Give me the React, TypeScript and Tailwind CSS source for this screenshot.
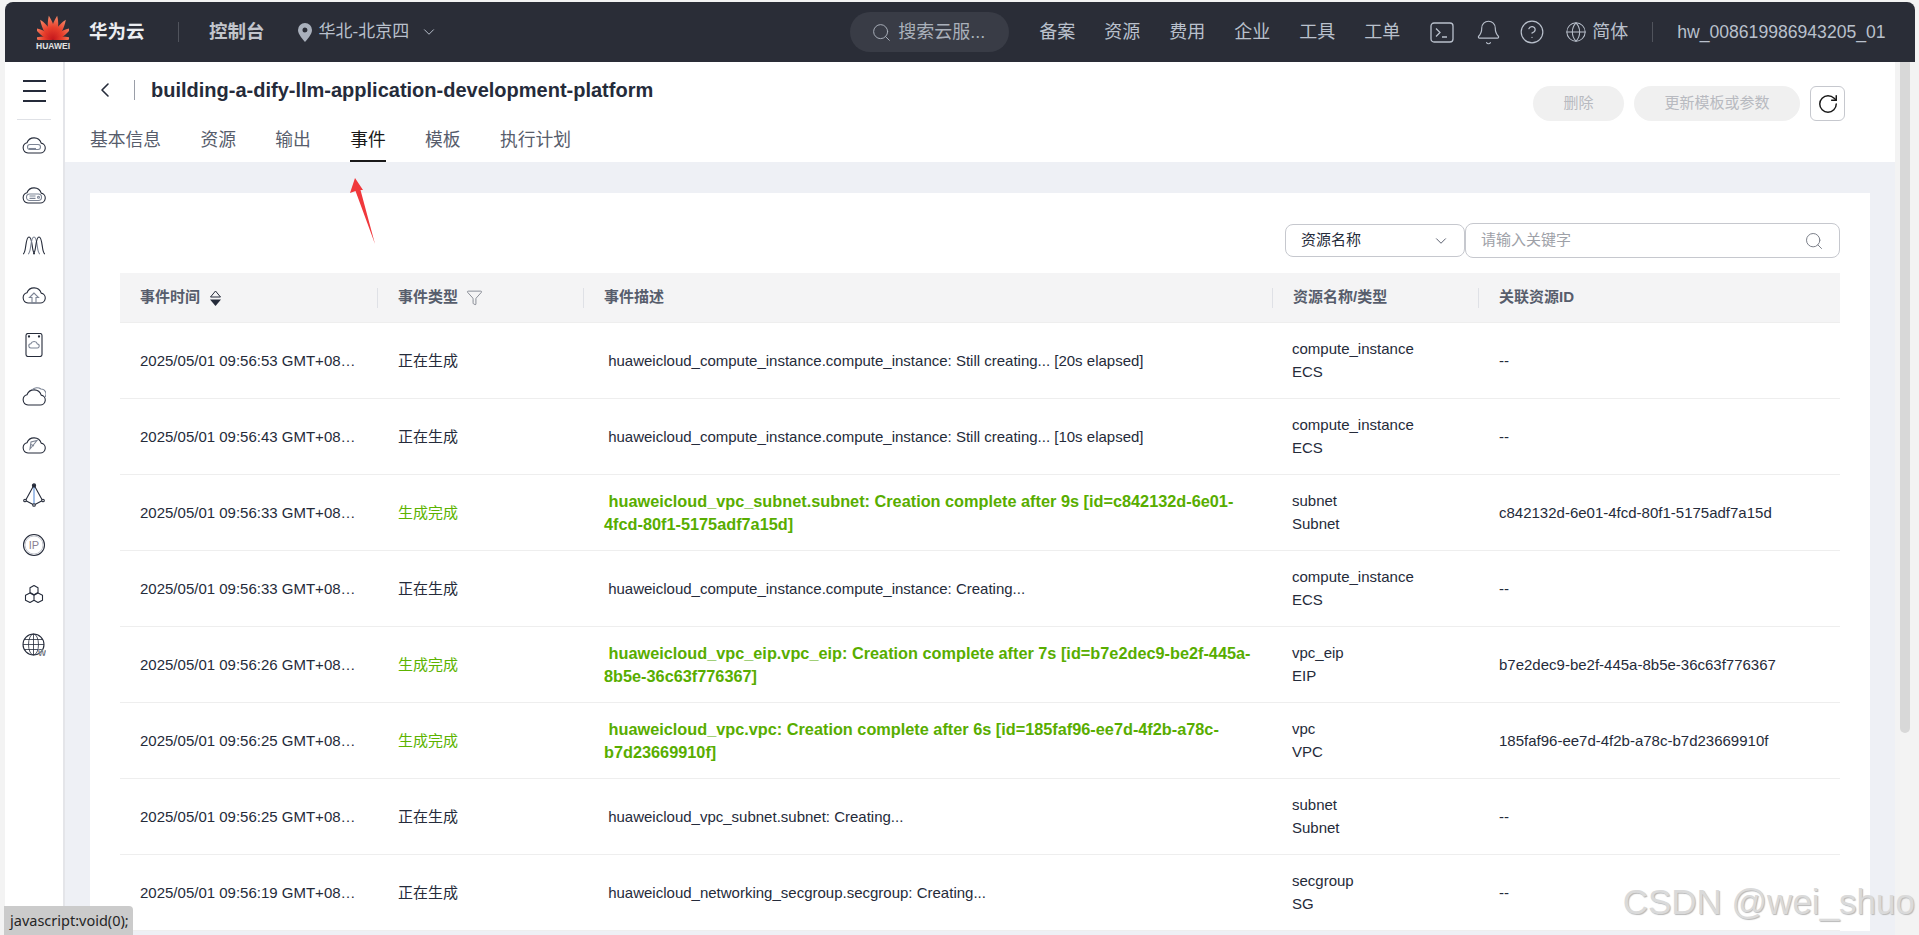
import { Bell, ChevronDown, ChevronLeft, CircleHelp, Funnel, Globe, RotateCw, Search } from 'lucide-react';
import type { ReactNode } from 'react';

type EventRow = {
    time: string;
    done: boolean;
    desc: string;
    name: string;
    type: string;
    id: string;
};

const navItems = ['备案', '资源', '费用', '企业', '工具', '工单'];
const tabs = ['基本信息', '资源', '输出', '事件', '模板', '执行计划'];

const rows: EventRow[] = [
    { time: '2025/05/01 09:56:53 GMT+08:00', done: false, desc: 'huaweicloud_compute_instance.compute_instance: Still creating... [20s elapsed]', name: 'compute_instance', type: 'ECS', id: '--' },
    { time: '2025/05/01 09:56:43 GMT+08:00', done: false, desc: 'huaweicloud_compute_instance.compute_instance: Still creating... [10s elapsed]', name: 'compute_instance', type: 'ECS', id: '--' },
    { time: '2025/05/01 09:56:33 GMT+08:00', done: true, desc: 'huaweicloud_vpc_subnet.subnet: Creation complete after 9s [id=c842132d-6e01-4fcd-80f1-5175adf7a15d]', name: 'subnet', type: 'Subnet', id: 'c842132d-6e01-4fcd-80f1-5175adf7a15d' },
    { time: '2025/05/01 09:56:33 GMT+08:00', done: false, desc: 'huaweicloud_compute_instance.compute_instance: Creating...', name: 'compute_instance', type: 'ECS', id: '--' },
    { time: '2025/05/01 09:56:26 GMT+08:00', done: true, desc: 'huaweicloud_vpc_eip.vpc_eip: Creation complete after 7s [id=b7e2dec9-be2f-445a-8b5e-36c63f776367]', name: 'vpc_eip', type: 'EIP', id: 'b7e2dec9-be2f-445a-8b5e-36c63f776367' },
    { time: '2025/05/01 09:56:25 GMT+08:00', done: true, desc: 'huaweicloud_vpc.vpc: Creation complete after 6s [id=185faf96-ee7d-4f2b-a78c-b7d23669910f]', name: 'vpc', type: 'VPC', id: '185faf96-ee7d-4f2b-a78c-b7d23669910f' },
    { time: '2025/05/01 09:56:25 GMT+08:00', done: false, desc: 'huaweicloud_vpc_subnet.subnet: Creating...', name: 'subnet', type: 'Subnet', id: '--' },
    { time: '2025/05/01 09:56:19 GMT+08:00', done: false, desc: 'huaweicloud_networking_secgroup.secgroup: Creating...', name: 'secgroup', type: 'SG', id: '--' },
];

const cloud = 'M6 17H18a5 5 0 0 0 1.2-9.9A7.5 7.5 0 0 0 5 6.8 5.2 5.2 0 0 0 6 17Z';

const NavIcon = ({ children }: { children: ReactNode }) => (
    <svg width="24" height="24" viewBox="0 0 24 24" fill="none" stroke="#252b3a" strokeWidth="1.1">
        {children}
    </svg>
);

const sideIcons: ReactNode[] = [
    <g transform="translate(0 3)">
        <path d={cloud} />
        <rect x="5.5" y="8.5" width="13" height="5" rx="2.5" stroke="#7d8595" />
        <path d="M7 12.5h7" stroke="#7d8595" />
    </g>,
    <g transform="translate(0 3)">
        <path d={cloud} />
        <rect x="4.5" y="8" width="15" height="6.5" rx="3.2" stroke="#7d8595" />
        <path d="M7.5 10h6M7.5 12.4h6" stroke="#7d8595" />
        <circle cx="16.5" cy="11.2" r="1" stroke="#7d8595" />
    </g>,
    <>
        <path d="M1 21C4.500 21 3 4 7 4C11 4 9.500 21 13 21" />
        <path d="M6 21C9.500 21 8 4 12 4C16 4 14.500 21 18 21" stroke="#7d8595" />
        <path d="M11 21C14.500 21 13 4 17 4C21 4 19.500 21 23 21" />
    </>,
    <g transform="translate(0 3)">
        <path d={cloud} />
        <path d="M12 7l-4.500 4.500H10V17h4v-5.500h2.500L12 7Z" stroke="#7d8595" />
    </g>,
    <>
        <rect x="4" y="0.5" width="16" height="23" rx="2" />
        <circle cx="7" cy="3.500" r="0.6" fill="#252b3a" />
        <circle cx="17" cy="3.500" r="0.6" fill="#252b3a" />
        <path d="M9 15h6a2 2 0 0 0 .4-4 3.500 3.500 0 0 0-6.600-.2A2.100 2.100 0 0 0 9 15Z" stroke="#7d8595" />
    </>,
    <g transform="translate(0 2)">
        <path d="M6 20H18a5 5 0 0 0 1.200-9.900A7.500 7.500 0 0 0 5 9.800 5.200 5.200 0 0 0 6 20Z" />
        <path d="M10 5a7 7 0 0 1 9-1 5 5 0 0 1 4 8" stroke="#7d8595" />
    </g>,
    <g transform="translate(0 3)">
        <path d={cloud} />
        <path d="M15 4.500L8 13l1-7 6-1.500ZM9 8.500l3 1.500" stroke="#7d8595" />
    </g>,
    <>
        <path d="M12 2L3.500 17.500 12 22l8.500-4.500L12 2Z" strokeLinejoin="round" />
        <path d="M12 2v20" stroke="#5b8fd8" />
        <circle cx="12" cy="2.500" r="1.600" fill="#252b3a" />
        <circle cx="3" cy="17.500" r="1.300" fill="#fff" />
        <circle cx="21" cy="17.500" r="1.300" fill="#fff" />
        <circle cx="12" cy="22" r="1.300" fill="#fff" />
    </>,
    <>
        <circle cx="12" cy="12" r="10.500" />
        <circle cx="12" cy="12" r="9" stroke="#9aa0ac" strokeWidth="0.6" />
        <text x="12" y="16" textAnchor="middle" fontSize="11" fontFamily="Liberation Sans" fill="#8a7f92" stroke="none">
            IP
        </text>
    </>,
    <>
        <path d="M12 2.500l4 2.300v4.700l-4 2.300-4-2.300V4.800l4-2.300Z" strokeLinejoin="round" />
        <path d="M8 10l4 2.200v5l-4 2.300-4.500-2.300v-5L8 10ZM16 10l4.500 2.200v5L16 19.500l-4-2.300v-5L16 10Z" strokeLinejoin="round" />
    </>,
    <>
        <circle cx="11.500" cy="11.500" r="10.500" />
        <path d="M1 11.500h21M2.500 6.500h18M2.500 16.500h18M11.500 1v21" strokeWidth="0.8" />
        <ellipse cx="11.500" cy="11.500" rx="5" ry="10.500" strokeWidth="0.8" />
        <text x="20" y="23" textAnchor="middle" fontSize="8.500" fontWeight="700" fontFamily="Liberation Sans" fill="#252b3a" stroke="#fff" strokeWidth="0.3">
            W
        </text>
    </>,
];

const HuaweiLogo = () => {
    const petals: [number, number][] = [
        [-86, 0.78],
        [-58, 0.9],
        [-33, 0.98],
        [-10, 1],
        [10, 1],
        [33, 0.98],
        [58, 0.9],
        [86, 0.78],
    ];
    return (
        <div className="flex w-[32px] flex-col items-center">
            <svg width="32" height="26" viewBox="0 0 32 26">
                <defs>
                    <linearGradient id="petal" x1="0" y1="0" x2="0" y2="1">
                        <stop offset="0" stopColor="#f58a6a" />
                        <stop offset="0.5" stopColor="#e8402c" />
                        <stop offset="1" stopColor="#c4161c" />
                    </linearGradient>
                </defs>
                {petals.map(([angle, scale]) => (
                    <path
                        key={angle}
                        d="M0 0C-4.200 -5 -4 -15 0 -24C4 -15 4.200 -5 0 0Z"
                        fill="url(#petal)"
                        transform={`translate(16 25.500) rotate(${angle}) scale(${scale} ${scale})`}
                    />
                ))}
            </svg>
            <span className="mt-[1px] text-[8.500px] leading-[10px] font-bold whitespace-nowrap text-[#e3e3e3]">HUAWEI</span>
        </div>
    );
};

const Header = () => (
    <header className="flex h-[60px] shrink-0 items-center rounded-t-[8px] bg-[#2a2d37] pl-[32px] text-[#b9c0cc]">
        <HuaweiLogo />
        <span className="ml-[20px] w-[56px] text-[18.500px] font-bold whitespace-nowrap text-[#eceef2]">华为云</span>
        <span className="ml-[33px] h-[20px] w-px bg-[#50535c]" />
        <span className="ml-[30px] text-[18.500px] font-bold whitespace-nowrap text-[#c2c5cc]">控制台</span>
        <svg className="ml-[33px]" width="14" height="19" viewBox="0 0 14 19" fill="#a9b0bc">
            <path fillRule="evenodd" d="M7 0a7 7 0 0 1 7 7c0 4.500-5 9.500-7 12C5 16.500 0 11.500 0 7a7 7 0 0 1 7-7Zm0 4.500a2.500 2.500 0 1 0 0 5 2.500 2.500 0 0 0 0-5Z" />
        </svg>
        <span className="ml-[7px] text-[17px] whitespace-nowrap">华北-北京四</span>
        <ChevronDown className="ml-[11px]" size={18} strokeWidth={1.3} />
        <div className="ml-[412px] flex h-[40px] w-[159px] items-center rounded-[20px] bg-[#393c46] pl-[21px] text-[#aab0ba]">
            <Search size={21} strokeWidth={1.1} />
            <span className="ml-[6px] text-[18px] whitespace-nowrap">搜索云服...</span>
        </div>
        <nav className="ml-[30px] flex gap-[29px] text-[18px] whitespace-nowrap">
            {navItems.map((item) => (
                <a key={item} href="#">
                    {item}
                </a>
            ))}
        </nav>
        <svg className="ml-[30px]" width="24" height="21" viewBox="0 0 24 21" fill="none" stroke="currentColor" strokeWidth="1.300">
            <rect x="1" y="1" width="22" height="19" rx="3" />
            <path d="M6 6.500l4 4-4 4M12 15h5" />
        </svg>
        <Bell className="ml-[21px]" size={27} strokeWidth={1} />
        <CircleHelp className="ml-[17px]" size={26} strokeWidth={1.1} />
        <Globe className="ml-[20px]" size={22} strokeWidth={1.1} />
        <span className="ml-[5px] text-[18px] whitespace-nowrap">简体</span>
        <span className="ml-[24px] h-[20px] w-px bg-[#50535c]" />
        <span className="ml-[24px] text-[17.600px] whitespace-nowrap">hw_008619986943205_01</span>
    </header>
);

const Sidebar = () => (
    <aside className="flex w-[60px] shrink-0 flex-col items-center border-r-2 border-[#e4e5e9] bg-white">
        <div className="flex h-[58px] w-[34px] flex-col items-center justify-center gap-[8px] border-b border-[#dfe1e6] pr-0">
            <span className="h-[2px] w-[23px] bg-[#252b3a]" />
            <span className="h-[2px] w-[23px] bg-[#252b3a]" />
            <span className="h-[2px] w-[23px] bg-[#252b3a]" />
        </div>
        {sideIcons.map((icon, i) => (
            <div key={i} className="flex h-[50px] w-full items-center justify-center">
                <NavIcon>{icon}</NavIcon>
            </div>
        ))}
    </aside>
);

const TopBar = () => (
    <div className="flex h-[100px] shrink-0 justify-between bg-white pr-[50px] pl-[25px]">
        <div>
            <div className="flex h-[56px] items-center">
                <ChevronLeft className="ml-[3px] text-[#252b3a]" size={24} strokeWidth={1.6} />
                <span className="ml-[17px] h-[20px] w-px bg-[#9a9ea8]" />
                <h1 className="ml-[16px] text-[20px] font-bold whitespace-nowrap text-[#252b3a]">
                    building-a-dify-llm-application-development-platform
                </h1>
            </div>
            <div className="flex h-[44px] gap-[39.300px] text-[17.800px] text-[#575d6c]">
                {tabs.map((tab) => (
                    <a
                        key={tab}
                        href="#"
                        className={
                            tab === '事件'
                                ? 'flex items-center border-b-2 border-[#191919] pt-[2px] text-[#191919]'
                                : 'flex items-center border-b-2 border-transparent pt-[2px]'
                        }
                    >
                        {tab}
                    </a>
                ))}
            </div>
        </div>
        <div className="flex items-start gap-[10px] pt-[24px]">
            <button className="h-[35px] w-[91px] rounded-[18px] bg-[#f0f0f0] text-[15px] text-[#b8bac0]">删除</button>
            <button className="h-[35px] w-[166px] rounded-[18px] bg-[#f0f0f0] text-[15px] text-[#b8bac0]">更新模板或参数</button>
            <button className="flex h-[35px] w-[35px] items-center justify-center rounded-[6px] border border-[#c6c8ce] text-[#191919]">
                <RotateCw size={22} strokeWidth={1.6} />
            </button>
        </div>
    </div>
);

const SearchRow = () => (
    <div className="flex h-[35px] justify-end">
        <div className="my-[1px] flex w-[180px] items-center justify-between rounded-[8px] border border-[#c6c8ce] pr-[14px] pl-[15px] text-[15px] text-[#252b3a]">
            资源名称
            <ChevronDown size={18} strokeWidth={1.3} className="text-[#575d6c]" />
        </div>
        <div className="flex w-[375px] items-center justify-between rounded-[8px] border border-[#c6c8ce] pr-[15px] pl-[15px] text-[15px] text-[#9ea1a8]">
            请输入关键字
            <Search size={20} strokeWidth={1.2} className="text-[#7c808a]" />
        </div>
    </div>
);

const gridCols = 'grid grid-cols-[257px_206px_689px_206px_362px]';

const HeadCell = ({ children, first }: { children: ReactNode; first?: boolean }) => (
    <div className={first ? 'flex h-[20px] items-center gap-[9px] pl-[20px]' : 'flex h-[20px] items-center gap-[8px] border-l border-[#dfe1e6] pl-[20px]'}>
        {children}
    </div>
);

const EventTable = () => (
    <div className="mt-[15px]">
        <div className={`${gridCols} h-[50px] items-center border-b border-[#eeeeee] bg-[#f4f4f5] text-[15px] font-bold text-[#575d6c]`}>
            <HeadCell first>
                事件时间
                <svg width="13" height="16" viewBox="0 0 13 16">
                    <path d="M6.500 1L11.500 7H1.500L6.500 1Z" fill="none" stroke="#252b3a" />
                    <path d="M1 9.500H12L6.500 16L1 9.500Z" fill="#252b3a" />
                </svg>
            </HeadCell>
            <HeadCell>
                事件类型
                <Funnel size={17} strokeWidth={1.1} className="text-[#6c717d]" />
            </HeadCell>
            <HeadCell>事件描述</HeadCell>
            <HeadCell>资源名称/类型</HeadCell>
            <HeadCell>关联资源ID</HeadCell>
        </div>
        {rows.map((row, i) => (
            <div key={i} className={`${gridCols} h-[76px] items-center border-b border-[#eeeeee] text-[15px] leading-[23px] text-[#252b3a]`}>
                <div className="w-[237px] truncate pl-[20px]">{row.time}</div>
                <div className={row.done ? 'pl-[21px] text-[#5cb300]' : 'pl-[21px]'}>{row.done ? '生成完成' : '正在生成'}</div>
                <div className={row.done ? 'pr-[19px] pl-[21px] text-[16.300px] font-bold text-[#58ad00]' : 'pr-[19px] pl-[21px]'}>
                    {'\u00a0'}
                    {row.desc}
                </div>
                <div className="pb-[2px] pl-[20px]">
                    <div>{row.name}</div>
                    <div>{row.type}</div>
                </div>
                <div className="pl-[21px]">{row.id}</div>
            </div>
        ))}
    </div>
);

export default function App() {
    return (
        <div className="relative flex h-[935px] w-full flex-col overflow-hidden bg-[#f3f3f3] pt-[2px] pr-[4px] pl-[5px] font-['Liberation_Sans','Noto_Sans_CJK_SC',sans-serif]">
            <Header />
            <div className="flex min-h-0 flex-1">
                <Sidebar />
                <main className="flex min-w-0 flex-1 flex-col bg-[#eef0f5]">
                    <TopBar />
                    <div className="px-[25px] pt-[31px]">
                        <section className="bg-white px-[30px] pt-[30px]">
                            <SearchRow />
                            <EventTable />
                        </section>
                    </div>
                </main>
                <div className="w-[20px] shrink-0 bg-[#f3f3f3] px-[5px]">
                    <div className="h-[671px] rounded-b-[5px] bg-[#d8d8d8]" />
                </div>
            </div>

            {/* annotation arrow drawn over the screenshot */}
            <svg className="absolute top-[176px] left-[348px]" width="30" height="70" viewBox="0 0 30 70">
                <path d="M7 2L15 14 12.500 14 27 68 7.500 15 2 17Z" fill="#f0383c" />
            </svg>

            <div className="absolute right-[4px] bottom-[18px] font-['Liberation_Sans',sans-serif] text-[35px] leading-[30px] whitespace-nowrap text-[#dadada] [text-shadow:1px_1px_1px_#b8b8b8]">
                CSDN @wei_shuo
            </div>

            <div className="absolute bottom-0 left-[4px] flex h-[29px] w-[129px] items-center rounded-tr-[4px] bg-[#cbcbcb] pl-[6px] font-['Noto_Sans',sans-serif] text-[14.500px] whitespace-nowrap text-[#252525]">
                javascript:void(0);
            </div>
        </div>
    );
}
